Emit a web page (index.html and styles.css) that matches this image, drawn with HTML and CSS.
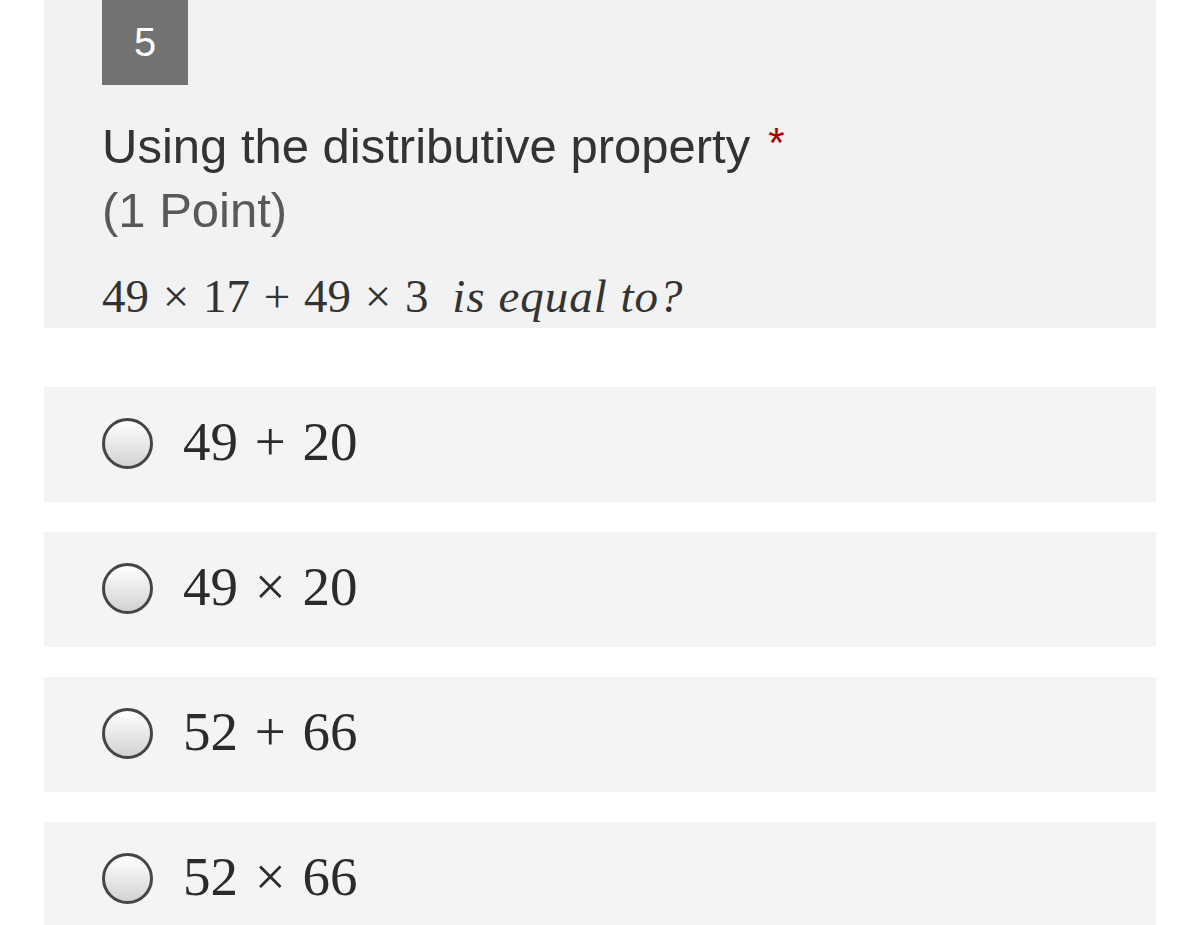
FILE: index.html
```html
<!DOCTYPE html>
<html>
<head>
<meta charset="utf-8">
<link rel="stylesheet" href="styles.css">
</head>
<body>
<div class="page">
  <section class="question">
    <div class="badge">5</div>
    <h2 class="title">Using the distributive property<span class="req">*</span></h2>
    <div class="points">(1 Point)</div>
    <div class="math">49 <span class="op">×</span> 17 <span class="op">+</span> 49 <span class="op">×</span> 3 <span class="it">is equal to?</span></div>
  </section>
  <div class="options">
    <label class="option"><span class="radio"></span><span class="opt-text">49 <span class="op">+</span> 20</span></label>
    <label class="option"><span class="radio"></span><span class="opt-text">49 <span class="op">×</span> 20</span></label>
    <label class="option"><span class="radio"></span><span class="opt-text">52 <span class="op">+</span> 66</span></label>
    <label class="option"><span class="radio"></span><span class="opt-text">52 <span class="op">×</span> 66</span></label>
  </div>
</div>
</body>
</html>
```
FILE: styles.css
```css
html, body {
  margin: 0;
  padding: 0;
  background: #ffffff;
}
body {
  font-family: "Liberation Sans", Arial, sans-serif;
  color: #333333;
}
.page {
  width: 1112px;
  margin-left: 44px;
}
.question {
  background: #f2f2f2;
  padding: 0 58px;
  height: 328px;
  box-sizing: border-box;
  overflow: hidden;
}
.badge {
  width: 86px;
  height: 85px;
  background: #727272;
  color: #ffffff;
  font-size: 40px;
  display: flex;
  align-items: center;
  justify-content: center;
}
.title {
  margin: 31px 0 0 0;
  font-weight: normal;
  font-size: 49px;
  line-height: 60px;
  color: #333333;
  white-space: nowrap;
}
.req {
  color: #a80000;
  font-size: 42px;
  line-height: 1;
  vertical-align: top;
  position: relative;
  top: 6px;
  margin-left: 18px;
}
.points {
  margin-top: 2px;
  font-size: 49px;
  line-height: 64px;
  color: #595959;
}
.math {
  margin-top: 24px;
  font-family: "Liberation Serif", "Times New Roman", serif;
  font-size: 47px;
  line-height: 60px;
  color: #333333;
  white-space: nowrap;
}
.math .op {
  padding: 0 2px;
}
.it {
  font-style: italic;
  margin-left: 12px;
  letter-spacing: 1px;
}
.options {
  display: flex;
  flex-direction: column;
  gap: 30px;
  margin-top: 59px;
}
.option {
  background: #f4f4f4;
  height: 115px;
  display: flex;
  align-items: center;
  padding-left: 58px;
  box-sizing: border-box;
}
.radio {
  width: 51px;
  height: 51px;
  box-sizing: border-box;
  border-radius: 50%;
  border: 3px solid #454545;
  background: linear-gradient(#ffffff, #d2d2d2);
  flex: none;
  margin-top: -3px;
}
.opt-text {
  margin-left: 30px;
  padding-bottom: 6px;
  font-family: "Liberation Serif", "Times New Roman", serif;
  font-size: 55px;
  line-height: 64px;
  color: #2b2b2b;
}
.opt-text .op {
  padding: 0 3px;
}
```
